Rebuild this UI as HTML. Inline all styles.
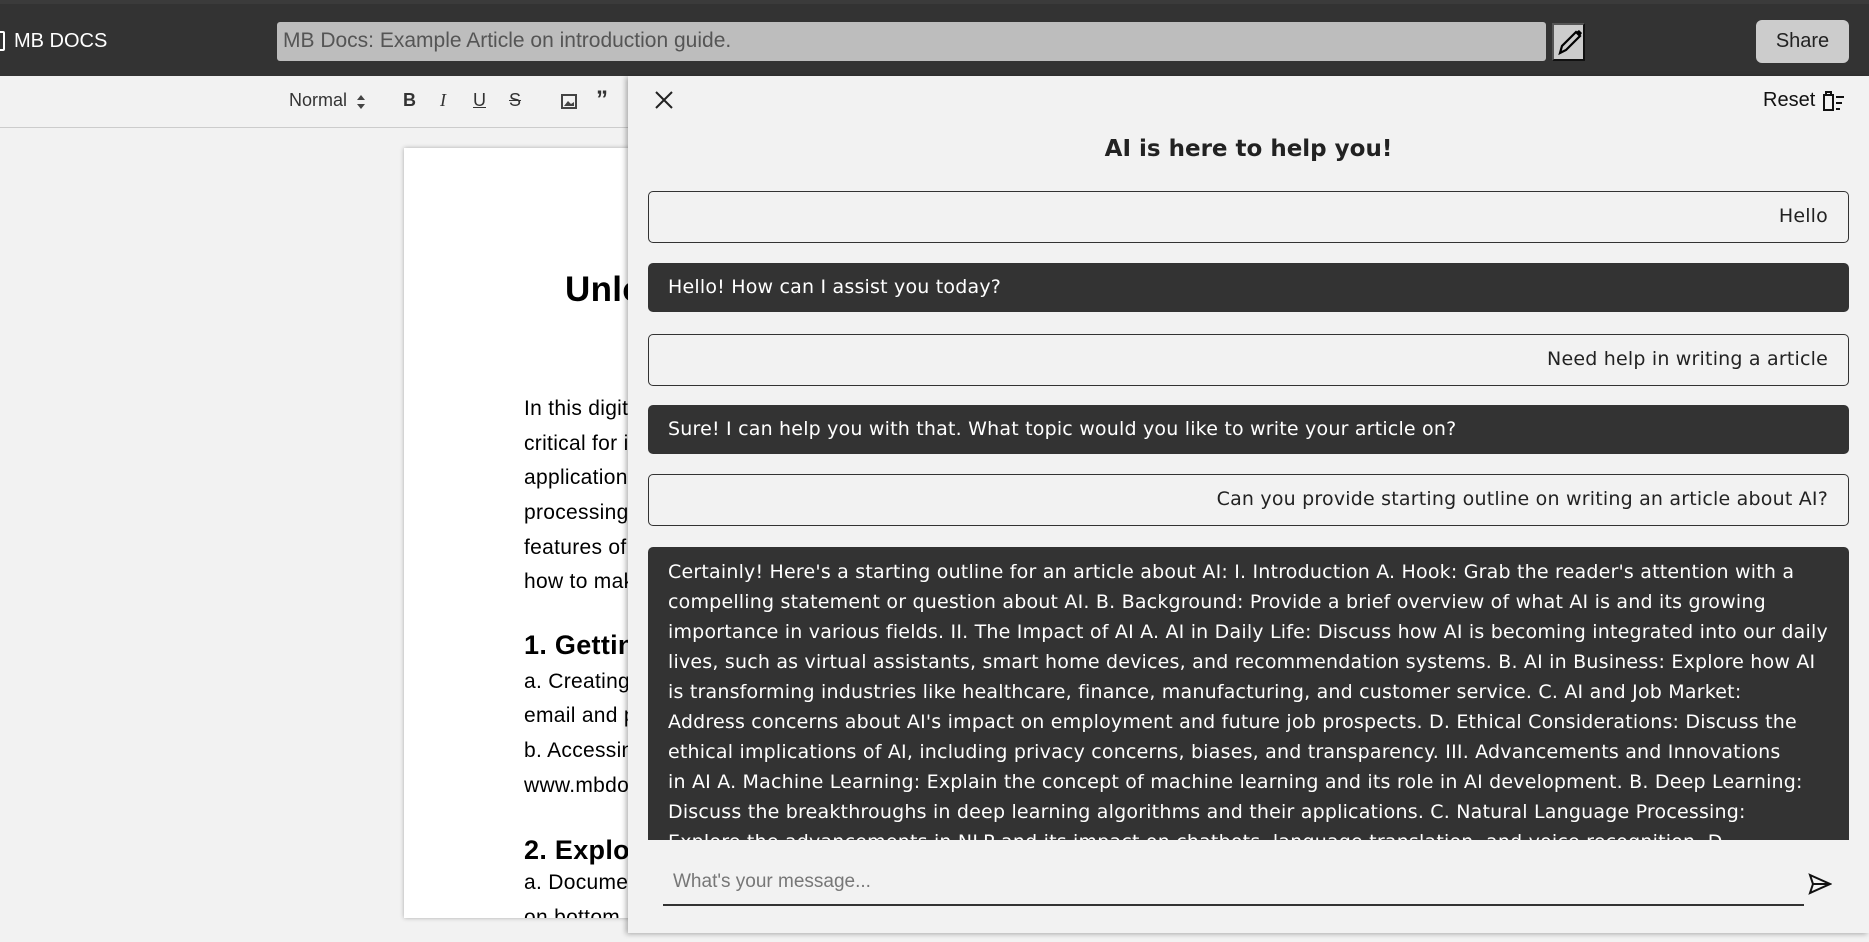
<!DOCTYPE html>
<html><head><meta charset="utf-8"><style>
*{box-sizing:border-box;margin:0;padding:0}
body{width:1869px;height:942px;overflow:hidden;background:#f2f2f2;font-family:"Liberation Sans",sans-serif;position:relative}
.top{position:absolute;left:0;top:0;width:1869px;height:76px;background:#333;border-top:4px solid #3b3b3b}
.logo{position:absolute;left:14px;top:26px;color:#fff;font-size:20px}
.logoic{position:absolute;left:-6px;top:27px;width:11px;height:20px;border:2px solid #fff;border-radius:2px}
.title{position:absolute;left:277px;top:18px;width:1269px;height:39px;background:#bdbdbd;border-radius:3px;color:#555;font-size:21px;padding:7px 6px}
.pen{position:absolute;left:1552px;top:19px;width:33px;height:38px;background:#ccc;border:2px solid #111;border-top-color:#555;border-left-color:#555}
.share{position:absolute;left:1756px;top:16px;width:93px;height:43px;background:#ccc;border-radius:6px;font-size:20px;color:#222;text-align:center;line-height:43px}
.tb{position:absolute;left:0;top:76px;width:1869px;height:52px;border-bottom:1px solid #ccc;background:#f2f2f2}
.tb span{position:absolute;top:14px;font-size:18px;color:#333}
.page{position:absolute;left:404px;top:148px;width:1000px;height:770px;background:#fff;box-shadow:0 0 4px #aaa;overflow:hidden}
.page div{position:absolute;left:120px;font-size:21px;letter-spacing:0.3px;color:#000;white-space:nowrap}
.page .h{font-weight:bold;font-size:27px}
.panel{position:absolute;left:628px;top:76px;width:1241px;height:857px;background:#f2f2f2;box-shadow:-2px 1px 5px rgba(0,0,0,.3)}
.pf{font-family:"DejaVu Sans",sans-serif}
.msg{position:absolute;left:20px;width:1201px;border-radius:5px;font-family:"DejaVu Sans",sans-serif;font-size:19px;letter-spacing:0.2px}
.u{border:1.5px solid #333;text-align:right;padding-right:20px;color:#222}
.b{background:#333;color:#fff;padding-left:20px}
</style></head><body>
<div class="top">
<div class="logoic"></div><div class="logo">MB DOCS</div>
<div class="title">MB Docs: Example Article on introduction guide.</div>
<div class="pen"><svg width="29" height="34" viewBox="0 0 29 34"><path d="M6 28 L8 21 L22 7 L26 11 L12 25 Z" fill="none" stroke="#000" stroke-width="2.2"/><path d="M22 7 L26 11 L28 8 L25 5 Z" fill="#000"/></svg></div>
<div class="share">Share</div>
</div>
<div class="tb">
<span style="left:289px">Normal</span>
<svg style="position:absolute;left:356px;top:18px" width="10" height="16"><path d="M1 6 L5 1 L9 6Z M1 10 L5 15 L9 10Z" fill="#444"/></svg>
<span style="left:403px;font-weight:bold">B</span>
<span style="left:440px;font-style:italic;font-family:'Liberation Serif'">I</span>
<span style="left:473px;text-decoration:underline">U</span>
<span style="left:509px;text-decoration:line-through">S</span>
<svg style="position:absolute;left:561px;top:18px" width="16" height="15"><rect x="1" y="1" width="14" height="13" fill="none" stroke="#444" stroke-width="2"/><path d="M3 12 L7 7 L10 10 L13 8 L13 12Z" fill="#444"/></svg>
<span style="left:596px;font-weight:bold;font-size:24px;top:10px">”</span>
</div>
<div class="page">
<div class="h" style="left:161px;top:122px;font-size:35px">Unlocking the Power of MB Docs</div>
<div style="top:249px">In this digital age, effective document management is</div>
<div style="top:284px">critical for individuals and businesses alike.</div>
<div style="top:318px">applications such as MB Docs offer word</div>
<div style="top:353px">processing and collaboration tools.</div>
<div style="top:388px">features of the MB Docs platform and</div>
<div style="top:422px">how to make the most of it.</div>
<div class="h" style="top:482px">1. Getting Started</div>
<div style="top:522px">a. Creating an account</div>
<div style="top:556px">email and password</div>
<div style="top:591px">b. Accessing MB Docs</div>
<div style="top:626px">www.mbdocs.com</div>
<div class="h" style="top:687px">2. Exploring</div>
<div style="top:723px">a. Document</div>
<div style="top:758px">on bottom</div>
</div>
<div class="panel">
<svg style="position:absolute;left:26px;top:14px" width="20" height="20"><path d="M2 2 L18 18 M18 2 L2 18" stroke="#222" stroke-width="2"/></svg>
<div style="position:absolute;left:1135px;top:13px;font-size:20px;color:#111">Reset</div>
<svg style="position:absolute;left:1192px;top:14px" width="26" height="22"><path d="M3 5 H14 M6 5 V2 H11 V5 M4 5 V20 H13 V5" fill="none" stroke="#111" stroke-width="2"/><path d="M16 7 H24 M16 13 H22 M16 19 H20" stroke="#111" stroke-width="2"/></svg>
<div class="pf" style="position:absolute;left:0;width:1241px;top:60px;text-align:center;font-size:23px;font-weight:bold;color:#222;letter-spacing:0px">AI is here to help you!</div>
<div class="msg u" style="top:115px;height:52px;line-height:49px">Hello</div>
<div class="msg b" style="top:187px;height:49px;line-height:49px">Hello! How can I assist you today?</div>
<div class="msg u" style="top:258px;height:52px;line-height:49px">Need help in writing a article</div>
<div class="msg b" style="top:329px;height:49px;line-height:49px">Sure! I can help you with that. What topic would you like to write your article on?</div>
<div class="msg u" style="top:398px;height:52px;line-height:49px">Can you provide starting outline on writing an article about AI?</div>
<div class="msg b" style="top:471px;height:293px;overflow:hidden;padding-top:10px;line-height:30px;white-space:nowrap;border-radius:5px 5px 0 0">Certainly! Here's a starting outline for an article about AI: I. Introduction A. Hook: Grab the reader's attention with a<br>compelling statement or question about AI. B. Background: Provide a brief overview of what AI is and its growing<br>importance in various fields. II. The Impact of AI A. AI in Daily Life: Discuss how AI is becoming integrated into our daily<br>lives, such as virtual assistants, smart home devices, and recommendation systems. B. AI in Business: Explore how AI<br>is transforming industries like healthcare, finance, manufacturing, and customer service. C. AI and Job Market:<br>Address concerns about AI's impact on employment and future job prospects. D. Ethical Considerations: Discuss the<br>ethical implications of AI, including privacy concerns, biases, and transparency. III. Advancements and Innovations<br>in AI A. Machine Learning: Explain the concept of machine learning and its role in AI development. B. Deep Learning:<br>Discuss the breakthroughs in deep learning algorithms and their applications. C. Natural Language Processing:<br>Explore the advancements in NLP and its impact on chatbots, language translation, and voice recognition. D.</div>
<div style="position:absolute;left:45px;top:795px;font-size:19px;color:#777">What's your message...</div>
<div style="position:absolute;left:35px;top:828px;width:1141px;height:2px;background:#333"></div>
<svg style="position:absolute;left:1180px;top:797px" width="24" height="22"><path d="M2 2 L22 11 L2 20 L5 11 Z M5 11 H22" fill="none" stroke="#111" stroke-width="2"/></svg>
</div>
</body></html>
